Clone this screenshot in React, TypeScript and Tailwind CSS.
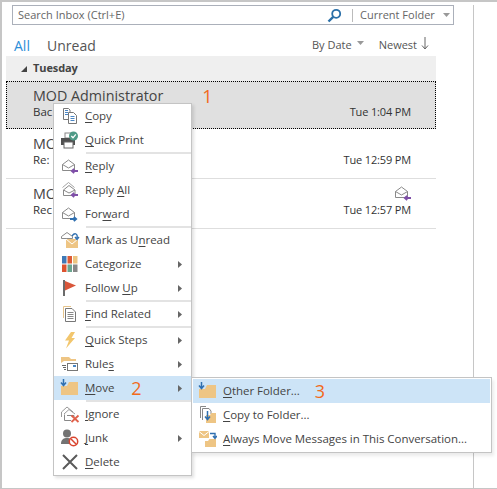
import React from "react";

const font = { fontFamily: '"Open Sans","Noto Sans",sans-serif' };

function Env({ arrow = "purple" }: { arrow?: "purple" | "blue" }) {
  const c = arrow === "purple" ? "#7f4fa8" : "#2f6fb0";
  return (
    <svg width="18" height="18" viewBox="0 0 18 18" fill="none">
      <path d="M1.5 7.5 L7.5 3 L13.5 7.5 V13.5 H1.5 Z" stroke="#8a8a8a" fill="#fff" />
      <path d="M1.5 7.5 L7.5 11 L13.5 7.5" stroke="#8a8a8a" />
      {arrow === "purple" ? (
        <path d="M17 14 H11 M13.2 11.8 L10.8 14 L13.2 16.2" stroke={c} strokeWidth="1.8" />
      ) : (
        <path d="M9 14 H15 M12.8 11.8 L15.2 14 L12.8 16.2" stroke={c} strokeWidth="1.8" />
      )}
    </svg>
  );
}

const icons: Record<string, React.ReactNode> = {
  copy: (
    <svg width="18" height="18" viewBox="0 0 18 18" fill="none">
      <path d="M2.5 1.5 H7.5 L9 3 V12.5 H2.5 Z" stroke="#777" fill="#fff" />
      <path d="M4 3.5 H7 M4 5.5 H7 M4 7.5 H7" stroke="#4a86c5" />
      <path d="M7.5 5.5 H12.5 L15.5 8.5 V16.5 H7.5 Z" stroke="#777" fill="#fff" />
      <path d="M9.5 9.5 H13.5 M9.5 11.5 H13.5 M9.5 13.5 H13.5" stroke="#4a86c5" />
    </svg>
  ),
  print: (
    <svg width="20" height="18" viewBox="0 0 20 18" fill="none">
      <rect x="5" y="2" width="7" height="5" fill="#fff" stroke="#888" />
      <rect x="1" y="7" width="14" height="7" fill="#505050" />
      <rect x="4" y="11" width="9" height="6" fill="#fff" stroke="#666" />
      <circle cx="13.5" cy="5" r="4.5" fill="#4e9a87" />
      <path d="M11.3 5 L13 6.8 L15.8 3.4" stroke="#fff" strokeWidth="1.3" />
    </svg>
  ),
  reply: <Env />,
  replyAll: (
    <svg width="18" height="18" viewBox="0 0 18 18" fill="none">
      <path d="M1.5 6.5 L7.5 1.5 L13.5 6.5" stroke="#a5a5a5" />
      <path d="M2.5 9 L8 4.5 L14 9 V14.5 H2.5 Z" stroke="#8a8a8a" fill="#fff" />
      <path d="M2.5 9 L8 12 L14 9" stroke="#8a8a8a" />
      <path d="M17 14 H11 M13.2 11.8 L10.8 14 L13.2 16.2" stroke="#7f4fa8" strokeWidth="1.8" />
    </svg>
  ),
  forward: <Env arrow="blue" />,
  unread: (
    <svg width="20" height="18" viewBox="0 0 20 18" fill="none">
      <path d="M1.5 5.5 L7 1.5 L12.5 5.5 V7.5 H1.5 Z" stroke="#8a8a8a" fill="#fff" />
      <rect x="6" y="8" width="12" height="9" fill="#eec584" />
      <path d="M6 8 L12 13 L18 8" stroke="#fff" />
      <path d="M12 5 C15 1 18 3 17 7 M15 6 L17 8.5 L19 6" stroke="#2f6fb0" strokeWidth="1.3" />
    </svg>
  ),
  categorize: (
    <svg width="16" height="16" viewBox="0 0 16 16">
      <rect x="0" y="0" width="4.5" height="7.5" fill="#3f79b5" />
      <rect x="5.5" y="0" width="4.5" height="7.5" fill="#dd5a35" />
      <rect x="11" y="0" width="4.5" height="7.5" fill="#ecc581" />
      <rect x="0" y="8.5" width="4.5" height="7.5" fill="#dc5330" />
      <rect x="5.5" y="8.5" width="4.5" height="7.5" fill="#6ba68f" />
      <rect x="11" y="8.5" width="4.5" height="7.5" fill="#888" />
    </svg>
  ),
  flag: (
    <svg width="14" height="16" viewBox="0 0 14 16">
      <rect x="0" y="0" width="2" height="16" fill="#6b6b6b" />
      <path d="M2 1 L13 5.5 L2 10.5 Z" fill="#d9563a" />
    </svg>
  ),
  find: (
    <svg width="18" height="18" viewBox="0 0 18 18" fill="none">
      <path d="M2.5 13 V1.5 H10" stroke="#e6c48c" />
      <path d="M4.5 3.5 H11 L14.5 7 V16.5 H4.5 Z" fill="#fff" stroke="#777" />
      <path d="M6.5 7.5 H12.5 M6.5 9.5 H12.5 M6.5 11.5 H12.5 M6.5 13.5 H12.5" stroke="#888" />
    </svg>
  ),
  bolt: (
    <svg width="12" height="17" viewBox="0 0 12 17">
      <path d="M7 0 L11 0 L7.5 6 L11 6 L2 16.5 L5 8.5 L1 8.5 Z" fill="#f2c66d" />
    </svg>
  ),
  rules: (
    <svg width="20" height="18" viewBox="0 0 20 18" fill="none">
      <path d="M1 8 V2 H9 L11 4 H16 V6 H4 Z" fill="#eec584" />
      <rect x="7.5" y="8.5" width="10" height="7" fill="#fff" stroke="#777" />
      <rect x="13" y="10" width="3" height="2" fill="#4a86c5" />
      <path d="M2 10.5 H6 M3 12.5 H6 M4 14.5 H6" stroke="#666" />
    </svg>
  ),
  move: (
    <svg width="20" height="18" viewBox="0 0 20 18" fill="none">
      <path d="M1 16 V7 H7 L9 3 H18 V16 Z" fill="#eec584" />
      <path d="M3.5 0 V6 M1 3.6 L3.5 6.6 L6 3.6" stroke="#2f6fb0" strokeWidth="1.5" />
    </svg>
  ),
  ignore: (
    <svg width="20" height="18" viewBox="0 0 20 18" fill="none">
      <path d="M1.5 7 L7 2 L13 7" stroke="#999" />
      <path d="M1.5 7 V12 M4 9 L9 4.5 L15 9" stroke="#999" />
      <path d="M4.5 9.5 V15.5 H11 M7 10.5 H14 V12" stroke="#888" />
      <path d="M11.5 10.5 L18.5 17 M18.5 10.5 L11.5 17" stroke="#e0604a" strokeWidth="1.8" />
    </svg>
  ),
  junk: (
    <svg width="20" height="18" viewBox="0 0 20 18" fill="none">
      <circle cx="7" cy="4.5" r="4" fill="#737373" />
      <path d="M1 15 C1 10 4 9 7 9 C10 9 13 10 13 15 Z" fill="#737373" />
      <circle cx="13.5" cy="12.5" r="4.2" fill="#fff" stroke="#d9452f" strokeWidth="1.5" />
      <path d="M10.8 9.8 L16.2 15.2" stroke="#d9452f" strokeWidth="1.5" />
    </svg>
  ),
  del: (
    <svg width="16" height="16" viewBox="0 0 16 16" fill="none">
      <path d="M1 1 L15 15 M15 1 L1 15" stroke="#5a5a5a" strokeWidth="2" />
    </svg>
  ),
  copyFolder: (
    <svg width="18" height="20" viewBox="0 0 18 20" fill="none">
      <path d="M1.5 13 V1.5 H7" stroke="#888" />
      <path d="M3.5 15 V3.5 H10 L12 6 V9" stroke="#888" />
      <path d="M7 18 V10 H11 L12.5 8 H17 V18 Z" fill="#eec584" />
      <path d="M8.5 6 V14 M6 11.5 L8.5 14.5 L11 11.5" stroke="#2f6fb0" strokeWidth="1.5" />
    </svg>
  ),
  always: (
    <svg width="18" height="18" viewBox="0 0 18 18" fill="none">
      <rect x="0" y="1" width="10" height="7" fill="#eec584" />
      <path d="M0 1.5 L5 5.5 L10 1.5" stroke="#fff" />
      <path d="M6 17 V11 H9 L10.5 9 H17 V17 Z" fill="#eec584" />
      <path d="M11 3.5 H16 V8 M14 6 L16 8.5 L18 6" stroke="#2f6fb0" strokeWidth="1.4" />
    </svg>
  ),
};

function Label({ pre, u, post }: { pre: string; u: string; post: string }) {
  return (
    <span className="tracking-[-0.03px]">
      {pre}
      <span className="underline underline-offset-2">{u}</span>
      {post}
    </span>
  );
}

type Item = { icon: string; pre: string; u: string; post: string; sub?: boolean; sep?: boolean; num?: string; active?: boolean };

const items: Item[] = [
  { icon: "copy", pre: "", u: "C", post: "opy" },
  { icon: "print", pre: "", u: "Q", post: "uick Print", sep: true },
  { icon: "reply", pre: "", u: "R", post: "eply" },
  { icon: "replyAll", pre: "Reply ", u: "A", post: "ll" },
  { icon: "forward", pre: "For", u: "w", post: "ard", sep: true },
  { icon: "unread", pre: "Mark as U", u: "n", post: "read" },
  { icon: "categorize", pre: "Ca", u: "t", post: "egorize", sub: true },
  { icon: "flag", pre: "Follow ", u: "U", post: "p", sub: true, sep: true },
  { icon: "find", pre: "", u: "F", post: "ind Related", sub: true, sep: true },
  { icon: "bolt", pre: "", u: "Q", post: "uick Steps", sub: true },
  { icon: "rules", pre: "Rule", u: "s", post: "", sub: true },
  { icon: "move", pre: "", u: "M", post: "ove", sub: true, sep: true, num: "2", active: true },
  { icon: "ignore", pre: "", u: "I", post: "gnore" },
  { icon: "junk", pre: "", u: "J", post: "unk", sub: true },
  { icon: "del", pre: "", u: "D", post: "elete" },
];

function Row({ name, prefix, time, selected, extra, icon }: { name: string; prefix: string; time: string; selected?: boolean; extra?: React.ReactNode; icon?: boolean }) {
  return (
    <div className={selected ? "relative h-[48px] bg-[#e0e0e0] pl-[26px] pr-[24px] pt-[4px] border border-dotted border-black" : "relative h-[50px] border-b border-[#dedede] pl-[27px] pr-[25px] pt-[5px]"}>
      <div className="flex items-center h-[20px] text-[14.3px] text-[#444]">
        <span>{name}</span>
        {extra}
      </div>
      <div className="-mt-[2px] flex items-center justify-between h-[16px] text-[#333]">
        <span className="text-[11.5px]">{prefix}</span>
        <span className="text-[11px] tracking-[-0.15px]">{time}</span>
      </div>
      {icon && (
        <div className="absolute right-[24px] top-[5px]">
          <Env />
        </div>
      )}
    </div>
  );
}

export default function App() {
  return (
    <div style={font} className="relative w-[497px] h-[489px] overflow-hidden bg-white border-t-2 border-l-2 border-b border-[#c6c6c6]">
      <div className="flex h-full w-[471px] flex-col">
        <div className="flex h-[20px] mt-[3px] ml-[10px] w-[442px] items-center border border-[#abb0ba] bg-white pl-[5px] text-[11px] text-[#666]">
          <span className="flex-1">Search Inbox (Ctrl+E)</span>
          <svg width="15" height="15" viewBox="0 0 15 15" fill="none" className="mr-[10px]">
            <circle cx="9.2" cy="5.8" r="4" stroke="#2a6fa8" strokeWidth="1.8" />
            <path d="M6.2 8.8 L1.5 13.5" stroke="#2a6fa8" strokeWidth="2.4" />
          </svg>
          <div className="h-[13px] w-px bg-[#bbb] mr-[7px]" />
          <span className="w-[74px] whitespace-nowrap">Current Folder</span>
          <svg width="7" height="4" viewBox="0 0 7 4" className="ml-[9px] mr-[3px]">
            <path d="M0 0 H7 L3.5 4 Z" fill="#999" />
          </svg>
        </div>
        <div className="flex h-[31px] items-center ml-[12px] pt-[9px] text-[14px]">
          <span className="text-[#2b8ed8] w-[33px]">All</span>
          <span className="text-[#555]">Unread</span>
          <span className="ml-auto flex items-center text-[11px] text-[#555] mr-[44px]">
            <span>By Date</span>
            <svg width="7" height="4" viewBox="0 0 7 4" className="ml-[5px] mb-[4px]">
              <path d="M0 0 H7 L3.5 4 Z" fill="#999" />
            </svg>
            <span className="ml-[15px]">Newest</span>
            <svg width="8" height="13" viewBox="0 0 8 13" fill="none" className="ml-[4px] mb-[3px]">
              <path d="M4 0 V12 M1 8.5 L4 12 L7 8.5" stroke="#666" />
            </svg>
          </span>
        </div>
        <div className="ml-[4px] w-[430px]">
          <div className="flex h-[25px] items-center bg-[#efefef] pl-[15px] text-[11px] font-bold tracking-[-0.1px] text-[#444]">
            <svg width="6" height="6" viewBox="0 0 6 6" className="mr-[6px]">
              <path d="M6 0 V6 H0 Z" fill="#444" />
            </svg>
            <span>Tuesday</span>
          </div>
          <Row selected name="MOD Administrator" prefix="Bac" time="Tue 1:04 PM" extra={<span className="ml-[39px] text-[18px] text-[#f26a1b]">1</span>} />
          <Row name="MO" prefix="Re:" time="Tue 12:59 PM" />
          <Row name="MO" prefix="Rec" time="Tue 12:57 PM" icon />
        </div>
      </div>

      <div className="absolute left-[471px] top-[3px] bottom-0 w-px bg-[#c6c6c6]" />

      <div className="absolute left-[51px] top-[101px] w-[139px] border border-[#c4c4c4] bg-white pb-px shadow-[2px_2px_3px_rgba(0,0,0,0.12)] text-[11.5px] text-[#444]">
        {items.map((it) => (
          <div key={it.icon}>
            <div className={it.active ? "flex h-[24px] items-center bg-[#cde4f7]" : "flex h-[24px] items-center"}>
              <div className="flex w-[31px] shrink-0 justify-center">{icons[it.icon]}</div>
              <Label pre={it.pre} u={it.u} post={it.post} />
              {it.num && <span className="ml-[17px] text-[18px] leading-none text-[#f26a1b]">{it.num}</span>}
              {it.sub && (
                <svg width="4" height="7" viewBox="0 0 4 7" className="ml-auto mr-[9px]">
                  <path d="M0 0 L4 3.5 L0 7 Z" fill="#666" />
                </svg>
              )}
            </div>
            {it.sep && <div className="ml-[32px] h-[2px] bg-[#e3e3e3]" />}
          </div>
        ))}
      </div>

      <div className="absolute left-[189px] top-[375px] w-[301px] border border-[#c4c4c4] bg-white p-px shadow-[2px_3px_3px_rgba(0,0,0,0.08)] text-[11.5px] text-[#444]">
        <div className="flex h-[24px] items-center bg-[#cde4f7]">
          <div className="flex w-[30px] justify-center">{icons.move}</div>
          <Label pre="" u="O" post="ther Folder..." />
          <span className="ml-[15px] text-[18px] leading-none text-[#f26a1b]">3</span>
        </div>
        <div className="flex h-[24px] items-center">
          <div className="flex w-[30px] justify-center">{icons.copyFolder}</div>
          <Label pre="" u="C" post="opy to Folder..." />
        </div>
        <div className="flex h-[24px] items-center">
          <div className="flex w-[30px] justify-center">{icons.always}</div>
          <Label pre="" u="A" post="lways Move Messages in This Conversation..." />
        </div>
      </div>
    </div>
  );
}
